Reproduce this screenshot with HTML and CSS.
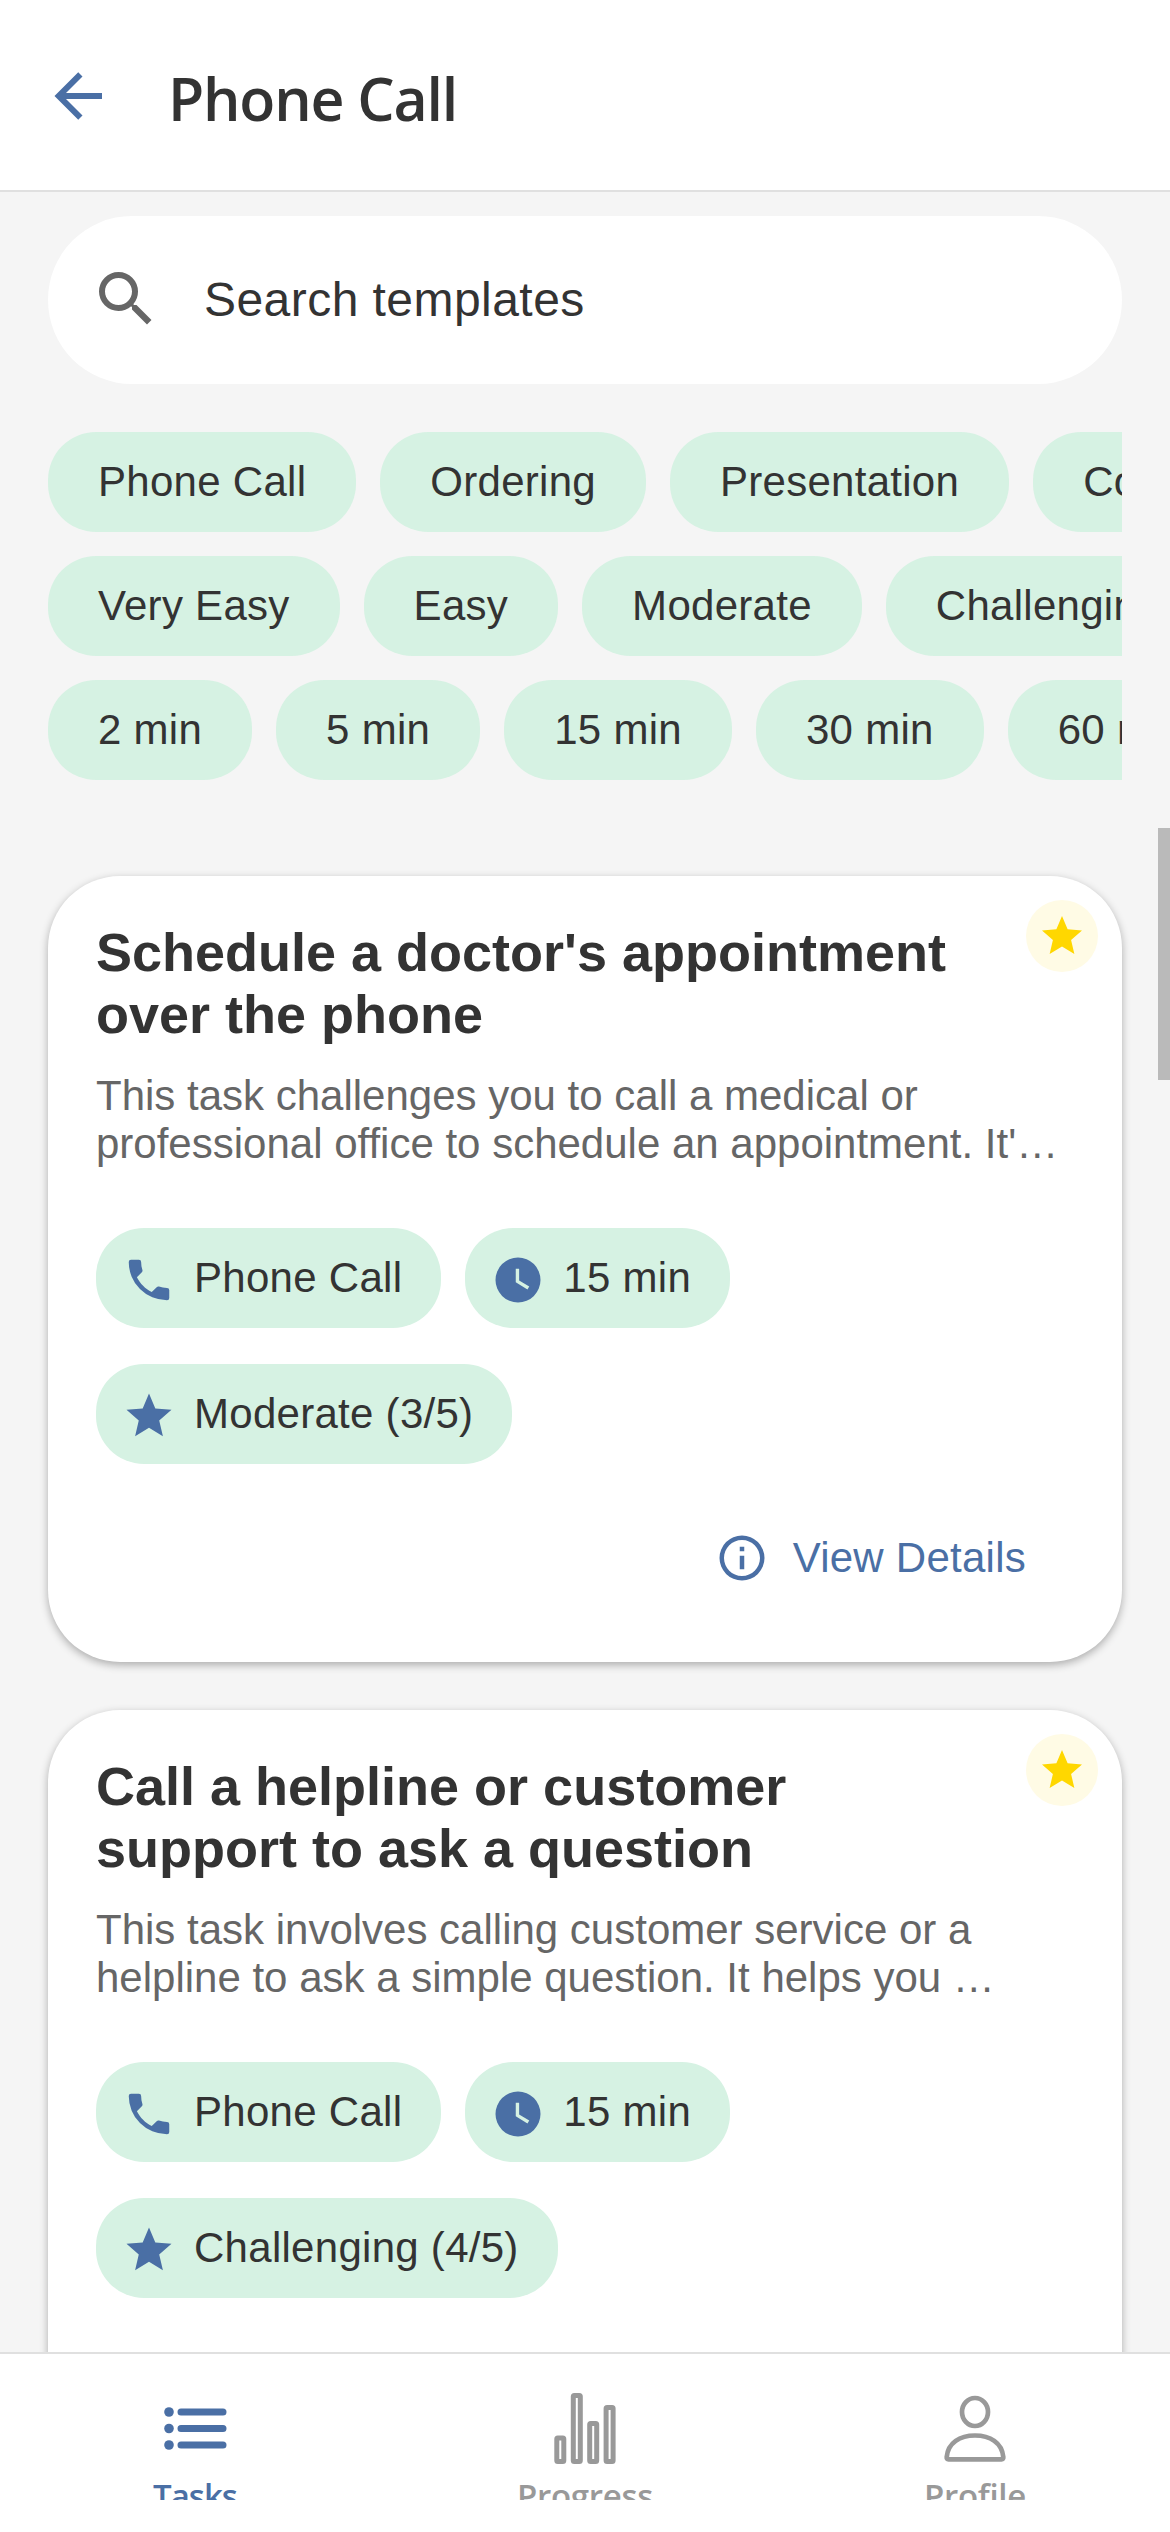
FILE: index.html
```html
<!DOCTYPE html>
<html lang="en">
<head>
<meta charset="utf-8">
<title>Phone Call</title>
<link rel="stylesheet" href="styles.css">
</head>
<body>
<svg class="sprite" aria-hidden="true">
  <symbol id="star" viewBox="0 0 24 24"><path d="M12 17.27 18.18 21l-1.64-7.03L22 9.24l-7.19-.62L12 2 9.19 8.62 2 9.24l5.45 4.73L5.82 21z"/></symbol>
  <symbol id="phone" viewBox="0 0 24 24"><path d="M6.62 10.79c1.44 2.83 3.76 5.15 6.59 6.59l2.2-2.2c.28-.28.67-.36 1.02-.25 1.12.37 2.32.57 3.57.57a1 1 0 0 1 1 1V20a1 1 0 0 1-1 1A17 17 0 0 1 3 4a1 1 0 0 1 1-1h3.5a1 1 0 0 1 1 1c0 1.25.2 2.45.57 3.57.11.35.03.74-.25 1.02z"/></symbol>
  <symbol id="clock" viewBox="0 0 24 24"><path d="M12 2a10 10 0 1 0 0 20 10 10 0 0 0 0-20m4.2 14.2L11 13V7h1.500v5.200l4.500 2.700z"/></symbol>
  <symbol id="info" viewBox="0 0 24 24"><path d="M11 9h2V7h-2m1 13c-4.410 0-8-3.590-8-8s3.590-8 8-8 8 3.590 8 8-3.590 8-8 8m0-18A10 10 0 0 0 2 12a10 10 0 0 0 10 10 10 10 0 0 0 10-10A10 10 0 0 0 12 2m-1 15h2v-6h-2z"/></symbol>
</svg>
<div class="screen">
  <header class="header">
    <svg class="back" viewBox="0 0 24 24"><path d="M20 11v2H8l5.500 5.500-1.420 1.420L4.160 12l7.920-7.920L13.500 5.500 8 11z"/></svg>
    <h1 class="title">Phone Call</h1>
  </header>
  <main class="content">
    <div class="search">
      <svg class="search-icon" viewBox="0 0 24 24"><path d="M15.500 14h-.79l-.28-.27A6.470 6.470 0 0 0 16 9.500 6.500 6.500 0 1 0 9.500 16c1.610 0 3.090-.59 4.230-1.570l.27.28v.79l5 4.990L20.490 19zm-6 0C7.010 14 5 11.990 5 9.500S7.010 5 9.500 5 14 7.010 14 9.500 11.990 14 9.500 14"/></svg>
      <span>Search templates</span>
    </div>
    <div class="filters">
      <div class="filter-row"><span class="chip">Phone Call</span><span class="chip">Ordering</span><span class="chip">Presentation</span><span class="chip">Conversation</span></div>
      <div class="filter-row"><span class="chip">Very Easy</span><span class="chip">Easy</span><span class="chip">Moderate</span><span class="chip">Challenging</span></div>
      <div class="filter-row"><span class="chip">2 min</span><span class="chip">5 min</span><span class="chip">15 min</span><span class="chip">30 min</span><span class="chip">60 min</span></div>
    </div>
    <article class="card">
      <div class="badge"><svg><use href="#star"/></svg></div>
      <h2 class="card-title">Schedule a doctor's appointment over the phone</h2>
      <p class="description">This task challenges you to call a medical or<br>professional office to schedule an appointment. It'…</p>
      <div class="tags">
        <span class="chip tag"><svg><use href="#phone"/></svg>Phone Call</span>
        <span class="chip tag"><svg><use href="#clock"/></svg>15 min</span>
        <span class="chip tag"><svg><use href="#star"/></svg>Moderate (3/5)</span>
      </div>
      <div class="details"><svg><use href="#info"/></svg>View Details</div>
    </article>
    <article class="card">
      <div class="badge"><svg><use href="#star"/></svg></div>
      <h2 class="card-title">Call a helpline or customer support to ask a question</h2>
      <p class="description">This task involves calling customer service or a<br>helpline to ask a simple question. It helps you …</p>
      <div class="tags">
        <span class="chip tag"><svg><use href="#phone"/></svg>Phone Call</span>
        <span class="chip tag"><svg><use href="#clock"/></svg>15 min</span>
        <span class="chip tag"><svg><use href="#star"/></svg>Challenging (4/5)</span>
      </div>
    </article>
    <div class="scroll-thumb"></div>
  </main>
  <nav class="tabs">
    <div class="tab active">
      <svg viewBox="0 0 72 72"><g fill="currentColor"><circle cx="10" cy="26" r="4.800"/><circle cx="10" cy="42.500" r="4.800"/><circle cx="10" cy="59" r="4.800"/></g><path stroke-width="7" d="M22 26h42M22 42.500h42M22 59h42"/></svg>
      <span>Tasks</span>
    </div>
    <div class="tab">
      <svg viewBox="0 0 72 72"><g stroke-width="5"><rect x="7.800" y="52" width="7" height="23.500" rx="1"/><rect x="24.300" y="9.500" width="7" height="66" rx="1"/><rect x="40.700" y="37.500" width="7" height="38" rx="1"/><rect x="57.100" y="21.500" width="7" height="54" rx="1"/></g></svg>
      <span>Progress</span>
    </div>
    <div class="tab">
      <svg viewBox="0 0 72 72"><g stroke-width="4.700"><ellipse cx="36" cy="26" rx="13" ry="14"/><path d="M9.500 73.300Q7.500 73.300 7.700 71C9 56.500 21 49.500 36 49.500s27 7 28.300 21.500q.2 2.300-1.800 2.300z"/></g></svg>
      <span>Profile</span>
    </div>
  </nav>
</div>
</body>
</html>
```
FILE: styles.css
```css
* { box-sizing: border-box; }
body { margin: 0; background: #fff; color: #333; font-family: "Liberation Sans", Arial, sans-serif; }
h1, h2, p { margin: 0; }
.sprite { display: none; }
.screen { display: flex; flex-direction: column; width: 1170px; height: 2500px; overflow: hidden; }

.header { display: flex; align-items: center; flex: none; height: 192px; padding-left: 42px; border-bottom: 2px solid #e0e0e0; background: #fff; }
.back { width: 72px; height: 72px; margin-top: 2px; fill: #4a6fa5; }
.title { margin: 5px 0 0 54px; font: 600 59px/80px "Open Sans", sans-serif; letter-spacing: -1.2px; }

.content { position: relative; flex: 1; min-height: 0; overflow: hidden; padding: 24px 48px 0; background: #f5f5f5; }
.search { display: flex; align-items: center; height: 168px; padding: 0 42px 2px; border-radius: 84px; background: #fff; font-size: 48px; letter-spacing: 0.45px; gap: 42px; }
.search-icon { width: 72px; height: 72px; fill: #666; }

.filters { display: flex; flex-direction: column; gap: 24px; margin: 48px 0 96px; }
.filter-row { display: flex; gap: 24px; overflow: hidden; }
.chip { display: flex; flex: none; align-items: center; height: 100px; padding: 0 50px; border-radius: 48px; background: #d6f2e3; font-size: 42px; letter-spacing: 0.28px; white-space: nowrap; }

.card { position: relative; height: 786px; margin-bottom: 48px; padding: 45px 48px 48px; border-radius: 72px; background: #fff; box-shadow: 0 3px 9px rgba(0, 0, 0, 0.3); }
.badge { position: absolute; top: 24px; right: 24px; display: flex; align-items: center; justify-content: center; width: 72px; height: 72px; border-radius: 50%; background: #fffbe5; fill: #ffd700; }
.badge svg { width: 48px; height: 48px; }
.card-title { width: 880px; font-size: 54px; line-height: 62px; }
.description { margin-top: 27px; color: #666; font-size: 42px; line-height: 48px; white-space: nowrap; }
.tags { display: flex; flex-wrap: wrap; gap: 36px 24px; margin-top: 60px; }
.tag { padding: 0 39px 0 26px; }
.tag svg { width: 54px; height: 54px; margin: 3px 18px 0 0; fill: #4a6fa5; }
.details { display: flex; align-items: center; justify-content: flex-end; gap: 24px; height: 60px; margin: 64px 48px 0 0; color: #4a6fa5; font-size: 42px; letter-spacing: 0.25px; }
.details svg { width: 54px; height: 54px; fill: currentColor; }
.scroll-thumb { position: absolute; top: 636px; right: 0; width: 12px; height: 252px; background: #bababa; }

.tabs { display: flex; flex: none; height: 148px; border-top: 2px solid #e0e0e0; background: #fff; overflow: hidden; }
.tab { display: flex; flex: 1; flex-direction: column; align-items: center; color: #999; font: 600 33px/46px "Open Sans", sans-serif; letter-spacing: -0.3px; }
.tab svg { flex: none; width: 72px; height: 72px; margin: 32px 0 15px; overflow: visible; fill: none; stroke: currentColor; stroke-linecap: round; stroke-linejoin: round; }
.tab g[fill] { stroke: none; }
.active { color: #4a6fa5; letter-spacing: -1px; }
```
